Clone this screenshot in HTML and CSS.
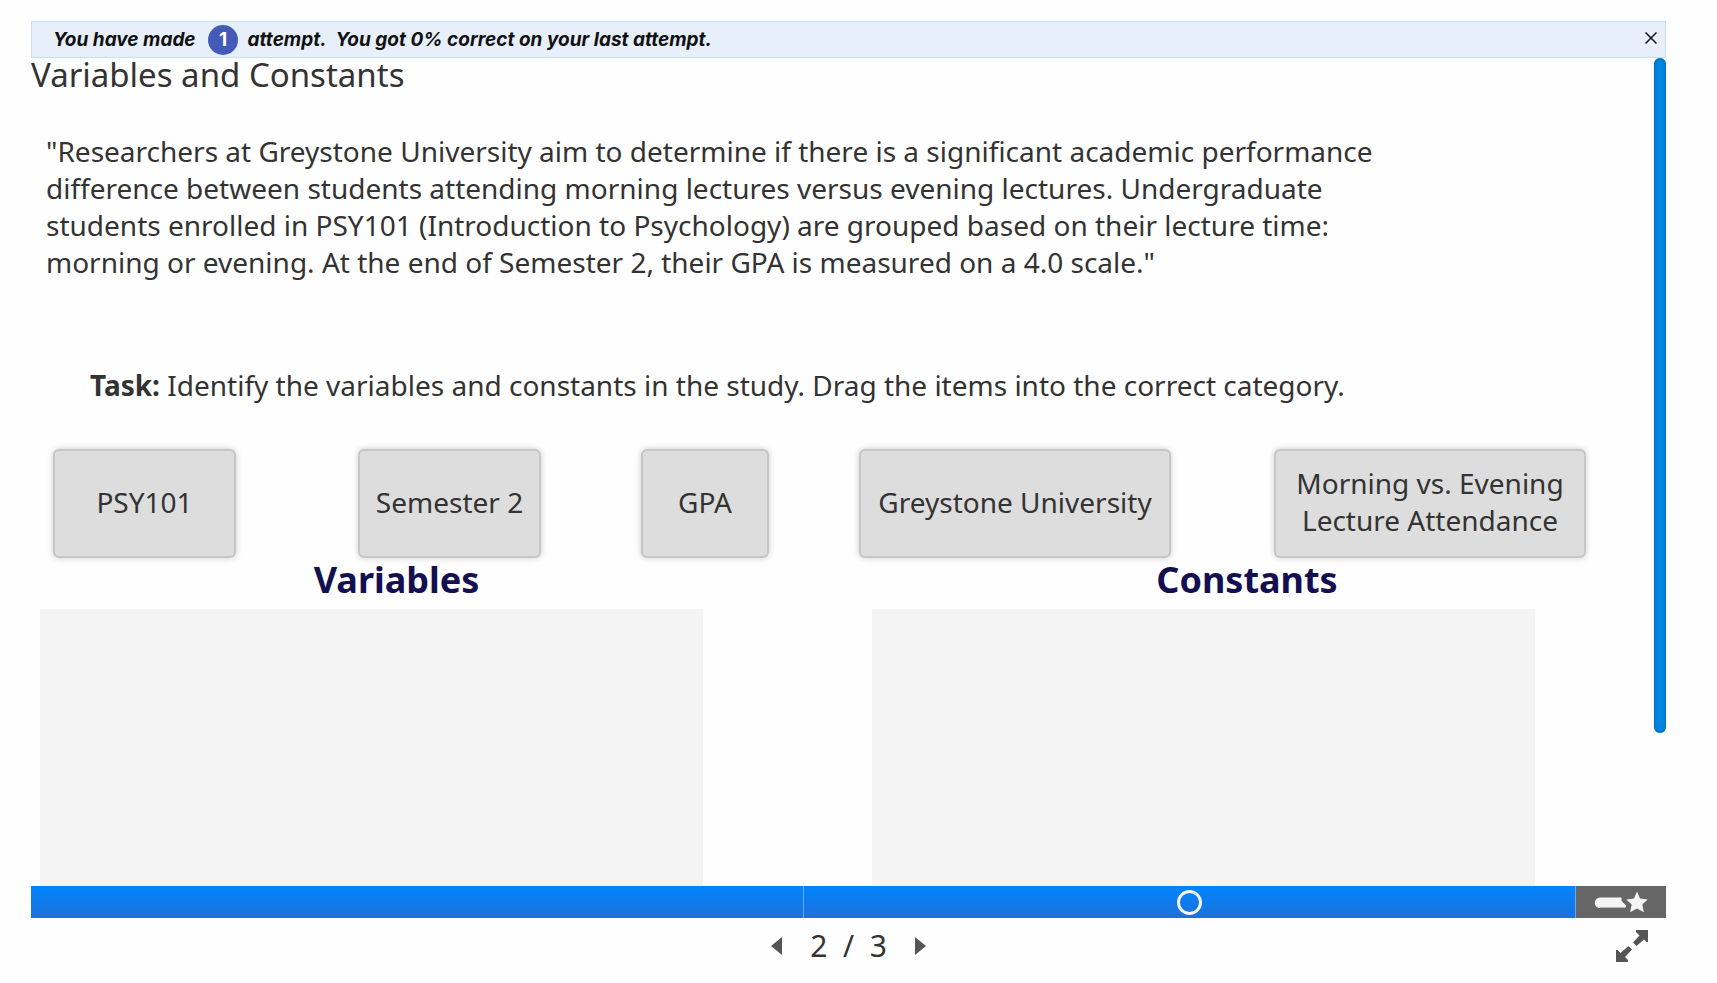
FILE: index.html
```html
<!DOCTYPE html>
<html lang="en">
<head>
    <meta charset="UTF-8">
    <meta name="viewport" content="width=device-width, initial-scale=1.0">
    <title>Variables and Constants</title>
    <link rel="stylesheet" href="styles.css">
</head>
<body>

    <div class="notice">
        <p class="notice-text">You have made <span class="attempts">1</span> attempt.&nbsp; You got 0% correct on your last attempt.</p>
        <button class="close" aria-label="Close">
            <svg viewBox="0 0 12 12" width="12" height="12"><path d="M0.5 0.5 L11.5 11.5 M11.5 0.5 L0.5 11.5" stroke="#111" stroke-width="1.5" fill="none"/></svg>
        </button>
    </div>

    <div class="stage">
        <main class="slide">
            <h1>Variables and Constants</h1>

            <p class="scenario">"Researchers at Greystone University aim to determine if there is a significant academic performance difference between students attending morning lectures versus evening lectures. Undergraduate students enrolled in PSY101 (Introduction to Psychology) are grouped based on their lecture time: morning or evening. At the end of Semester 2, their GPA is measured on a 4.0 scale."</p>

            <p class="task"><strong>Task:</strong> Identify the variables and constants in the study. Drag the items into the correct category.</p>

            <div class="items">
                <button class="item" draggable="true">PSY101</button>
                <button class="item" draggable="true">Semester 2</button>
                <button class="item" draggable="true">GPA</button>
                <button class="item" draggable="true">Greystone University</button>
                <button class="item" draggable="true">Morning vs. Evening Lecture Attendance</button>
            </div>

            <div class="categories">
                <section class="category">
                    <h2>Variables</h2>
                    <div class="dropzone"></div>
                </section>
                <section class="category">
                    <h2>Constants</h2>
                    <div class="dropzone"></div>
                </section>
            </div>
        </main>
        <div class="scrollbar"></div>
    </div>

    <div class="progress">
        <button class="part" aria-label="Slide 1"></button>
        <button class="part" aria-label="Slide 2"><span class="ring"></span></button>
        <button class="summary" aria-label="Summary">
            <svg viewBox="0 0 54 22" width="54" height="22">
                <path d="M6 6.5 H27.5 V10 L32 14.5 V17 H6 A5.2 5.2 0 0 1 6 6.5 Z" fill="#f5f5f5"/>
                <path d="M6 16.5 H32" stroke="#b5b5b5" stroke-width="1"/>
                <path d="M43 0.5 L46 7.5 L53.7 8.4 L48.3 13.6 L49.9 21.2 L43 17.4 L36.1 21.2 L37.7 13.6 L32.3 8.4 L40 7.5 Z" fill="#f5f5f5"/>
            </svg>
        </button>
    </div>

    <footer class="footer">
        <div class="pager">
            <button aria-label="Previous slide">
                <svg viewBox="0 0 11 18" width="11" height="18"><path d="M11 0 V18 L0 9 Z" fill="#555"/></svg>
            </button>
            <span class="count">2&nbsp; /&nbsp; 3</span>
            <button aria-label="Next slide">
                <svg viewBox="0 0 11 18" width="11" height="18"><path d="M0 0 V18 L11 9 Z" fill="#555"/></svg>
            </button>
        </div>
        <button class="fullscreen" aria-label="Full screen">
            <svg viewBox="0 0 32 32" width="32" height="32">
                <path d="M20 0 H32 V12 H30.5 L28 9.5 L20.5 16 L17 12.5 L23.5 5.5 L20 2 Z" fill="#555"/>
                <path d="M12 32 H0 V20 H1.5 L4.5 23 L12.5 16 L16 19.5 L9 27 L12 30 Z" fill="#555"/>
            </svg>
        </button>
    </footer>

</body>
</html>
```

FILE: styles.css
```css
* {
    box-sizing: border-box;
}

body {
    margin: 0;
    padding: 21px 51px 0 31px;
    height: 100vh;
    display: flex;
    flex-direction: column;
    font-family: "Noto Sans", sans-serif;
    font-size: 28px;
    line-height: 37px;
    color: #333;
    background: #fefefe;
}

h1, h2, p {
    margin: 0;
}

button {
    padding: 0;
    border: none;
    background: none;
    font: inherit;
    color: inherit;
    cursor: pointer;
}

svg {
    display: block;
}

.notice {
    display: flex;
    justify-content: space-between;
    align-items: center;
    height: 37px;
    padding: 0 8px 0 21px;
    border: 1px solid #c8dcf3;
    background: #e7effb;
}

.notice-text {
    font-family: Inter, sans-serif;
    font-size: 19px;
    font-style: italic;
    font-weight: 700;
    line-height: 30px;
    color: #111;
}

.attempts {
    display: inline-block;
    width: 30px;
    height: 30px;
    margin: 0 5px 0 8px;
    border-radius: 50%;
    text-align: center;
    font-style: normal;
    color: #fff;
    background: #435ab8;
}

.close {
    padding-bottom: 4px;
}

.stage {
    flex: 1;
    min-height: 0;
    display: flex;
}

.slide {
    flex: 1;
    display: flex;
    flex-direction: column;
}

.scrollbar {
    width: 12px;
    height: 81.5%;
    border-radius: 6px;
    background: #0287e3;
    box-shadow: inset 0 0 5px #0063a8;
}

h1 {
    font-size: 33px;
    line-height: 34px;
    font-weight: normal;
}

.scenario {
    margin: 41px 240px 0 15px;
}

.task {
    margin: 86px 0 45px 59px;
}

/* items sit in the odd columns, the even ones are the gaps */
.items {
    display: grid;
    grid-template-columns: 183fr 122fr 183fr 100fr 128fr 90fr 312fr 103fr 312fr;
    margin: 0 68px 0 22px;
}

.item {
    min-height: 109px;
    padding: 0 14px 3px;
    border: 2px solid #c6c6c6;
    border-radius: 6px;
    background: #ddd;
    box-shadow: 0 0 6px rgba(0, 0, 0, 0.2);
}

.item:nth-child(2) {
    grid-column: 3;
}

.item:nth-child(3) {
    grid-column: 5;
}

.item:nth-child(4) {
    grid-column: 7;
}

.item:nth-child(5) {
    grid-column: 9;
}

.categories {
    flex: 1;
    display: grid;
    grid-template-columns: 663fr 663fr;
    column-gap: 169px;
    margin: 0 119px 0 9px;
}

.category {
    display: flex;
    flex-direction: column;
}

h2 {
    margin-bottom: 7px;
    padding-left: 50px;
    font-size: 36px;
    line-height: 44px;
    text-align: center;
    color: #140f50;
}

.category:last-child h2 {
    padding-left: 87px;
}

.dropzone {
    flex: 1;
    background: #f4f4f4;
}

.progress {
    display: flex;
    height: 32px;
}

.part {
    flex: 1;
    display: flex;
    align-items: center;
    justify-content: center;
    border-right: 1px solid #6aa9ee;
    background: linear-gradient(#0084ff, #1d72d8);
}

.ring {
    width: 25px;
    height: 25px;
    border: 3px solid #f5f5f5;
    border-radius: 50%;
}

.summary {
    display: flex;
    align-items: center;
    justify-content: center;
    width: 90px;
    background: #666;
}

.footer {
    display: grid;
    grid-template-columns: 1fr auto 1fr;
    align-items: center;
    height: 55px;
    margin-bottom: 10px;
}

.pager {
    grid-column: 2;
    display: flex;
    align-items: center;
    gap: 28px;
}

.count {
    font-size: 30px;
}

.fullscreen {
    justify-self: end;
    margin-right: 18px;
}
```
